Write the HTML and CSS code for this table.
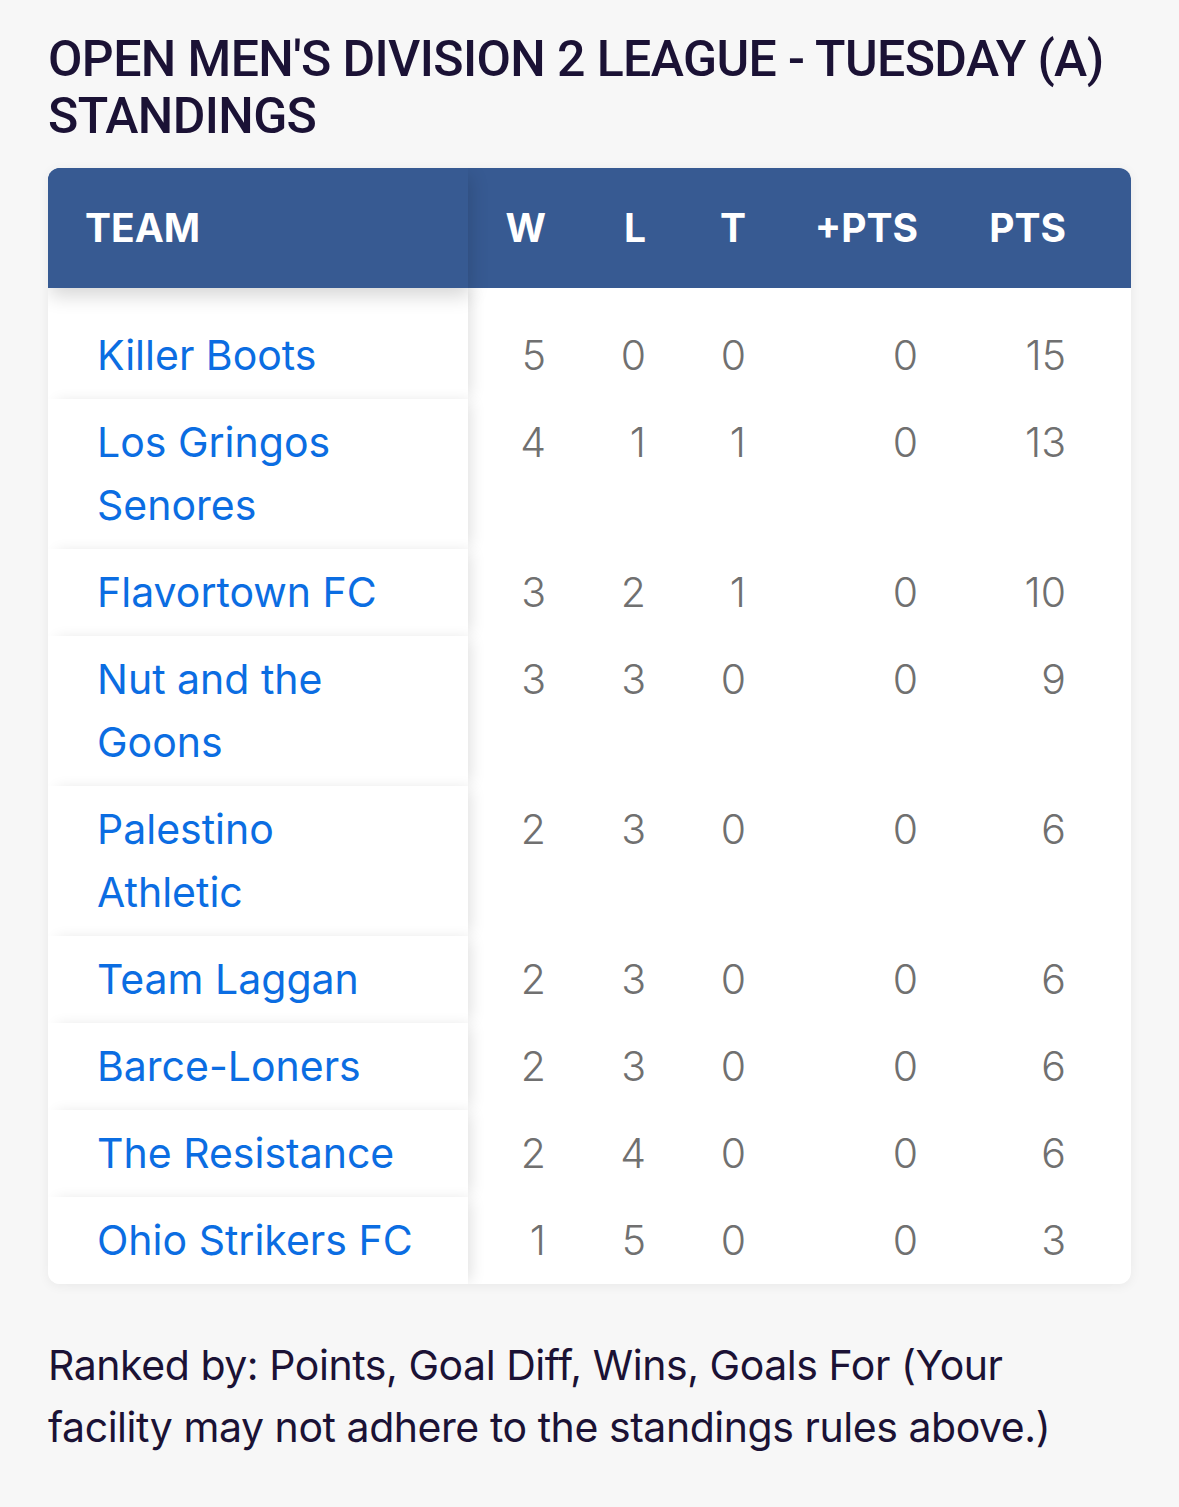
FILE: index.html
```html
<!DOCTYPE html>
<html lang="en">
<head>
<meta charset="utf-8">
<title>Standings</title>
<link rel="stylesheet" href="styles.css">
</head>
<body>
<main class="page">
  <h1 class="title">OPEN MEN'S DIVISION 2 LEAGUE - TUESDAY (A) STANDINGS</h1>
  <section class="card">
    <div class="row head">
      <div class="team">TEAM</div>
      <div class="num">W</div>
      <div class="num">L</div>
      <div class="num">T</div>
      <div class="num">+PTS</div>
      <div class="num">PTS</div>
      <div class="pad"></div>
    </div>
    <div class="row first">
      <div class="team"><a href="#">Killer Boots</a></div>
      <div class="num">5</div><div class="num">0</div><div class="num">0</div><div class="num">0</div><div class="num">15</div><div class="pad"></div>
    </div>
    <div class="row">
      <div class="team"><a href="#">Los Gringos Senores</a></div>
      <div class="num">4</div><div class="num">1</div><div class="num">1</div><div class="num">0</div><div class="num">13</div><div class="pad"></div>
    </div>
    <div class="row">
      <div class="team"><a href="#">Flavortown FC</a></div>
      <div class="num">3</div><div class="num">2</div><div class="num">1</div><div class="num">0</div><div class="num">10</div><div class="pad"></div>
    </div>
    <div class="row">
      <div class="team"><a href="#">Nut and the Goons</a></div>
      <div class="num">3</div><div class="num">3</div><div class="num">0</div><div class="num">0</div><div class="num">9</div><div class="pad"></div>
    </div>
    <div class="row">
      <div class="team"><a href="#">Palestino Athletic</a></div>
      <div class="num">2</div><div class="num">3</div><div class="num">0</div><div class="num">0</div><div class="num">6</div><div class="pad"></div>
    </div>
    <div class="row">
      <div class="team"><a href="#">Team Laggan</a></div>
      <div class="num">2</div><div class="num">3</div><div class="num">0</div><div class="num">0</div><div class="num">6</div><div class="pad"></div>
    </div>
    <div class="row">
      <div class="team"><a href="#">Barce-Loners</a></div>
      <div class="num">2</div><div class="num">3</div><div class="num">0</div><div class="num">0</div><div class="num">6</div><div class="pad"></div>
    </div>
    <div class="row">
      <div class="team"><a href="#">The Resistance</a></div>
      <div class="num">2</div><div class="num">4</div><div class="num">0</div><div class="num">0</div><div class="num">6</div><div class="pad"></div>
    </div>
    <div class="row">
      <div class="team"><a href="#">Ohio Strikers FC</a></div>
      <div class="num">1</div><div class="num">5</div><div class="num">0</div><div class="num">0</div><div class="num">3</div><div class="pad"></div>
    </div>
  </section>
  <p class="note">Ranked by: Points, Goal Diff, Wins, Goals For (Your facility may not adhere to the standings rules above.)</p>
</main>
</body>
</html>
```
FILE: styles.css
```css
html, body {
  margin: 0;
  padding: 0;
  background: #f7f7f7;
}
body {
  font-family: Inter, "Noto Sans", "Liberation Sans", sans-serif;
  color: #1b1235;
}
.page {
  padding: 31px 48px 40px;
}
.title {
  margin: 0 0 23px;
  font-family: Roboto, Inter, "Liberation Sans", sans-serif;
  font-size: 50px;
  line-height: 57px;
  font-weight: 500;
  letter-spacing: -0.6px;
  color: #1b1235;
}
.card {
  background: #fff;
  border-radius: 12px;
  overflow: hidden;
  box-shadow: 0 2px 12px rgba(0, 0, 0, 0.06);
}
.row {
  display: grid;
  grid-template-columns: 420px 78px 100px 100px 172px 148px 65px;
  font-size: 41px;
  line-height: 63px;
}
.row .team {
  position: relative;
  z-index: 1;
  background: #fff;
  padding: 12px 49px 12px 49px;
  box-shadow: 6px 0 14px -3px rgba(0, 0, 0, 0.12);
}
.row .team a {
  color: #0b6de2;
  text-decoration: none;
  font-weight: 400;
}
.row .num {
  padding: 12px 0;
  text-align: right;
  color: #707070;
  font-weight: 300;
}
.row.first .team,
.row.first .num {
  padding-top: 36px;
}
.row.head {
  position: relative;
  z-index: 2;
  background: #375a92;
  height: 120px;
  align-items: center;
}
.row.head .team,
.row.head .num {
  padding: 0;
  background: #375a92;
  color: #fff;
  font-weight: 700;
  font-size: 39px;
  line-height: 120px;
}
.row.head .team {
  padding-left: 37px;
  box-shadow: 2px 8px 18px rgba(0, 0, 0, 0.16);
}
.note {
  margin: 50px 0 0;
  font-size: 41px;
  line-height: 62px;
  font-weight: 400;
  color: #1b1235;
  letter-spacing: -0.45px;
}
```
